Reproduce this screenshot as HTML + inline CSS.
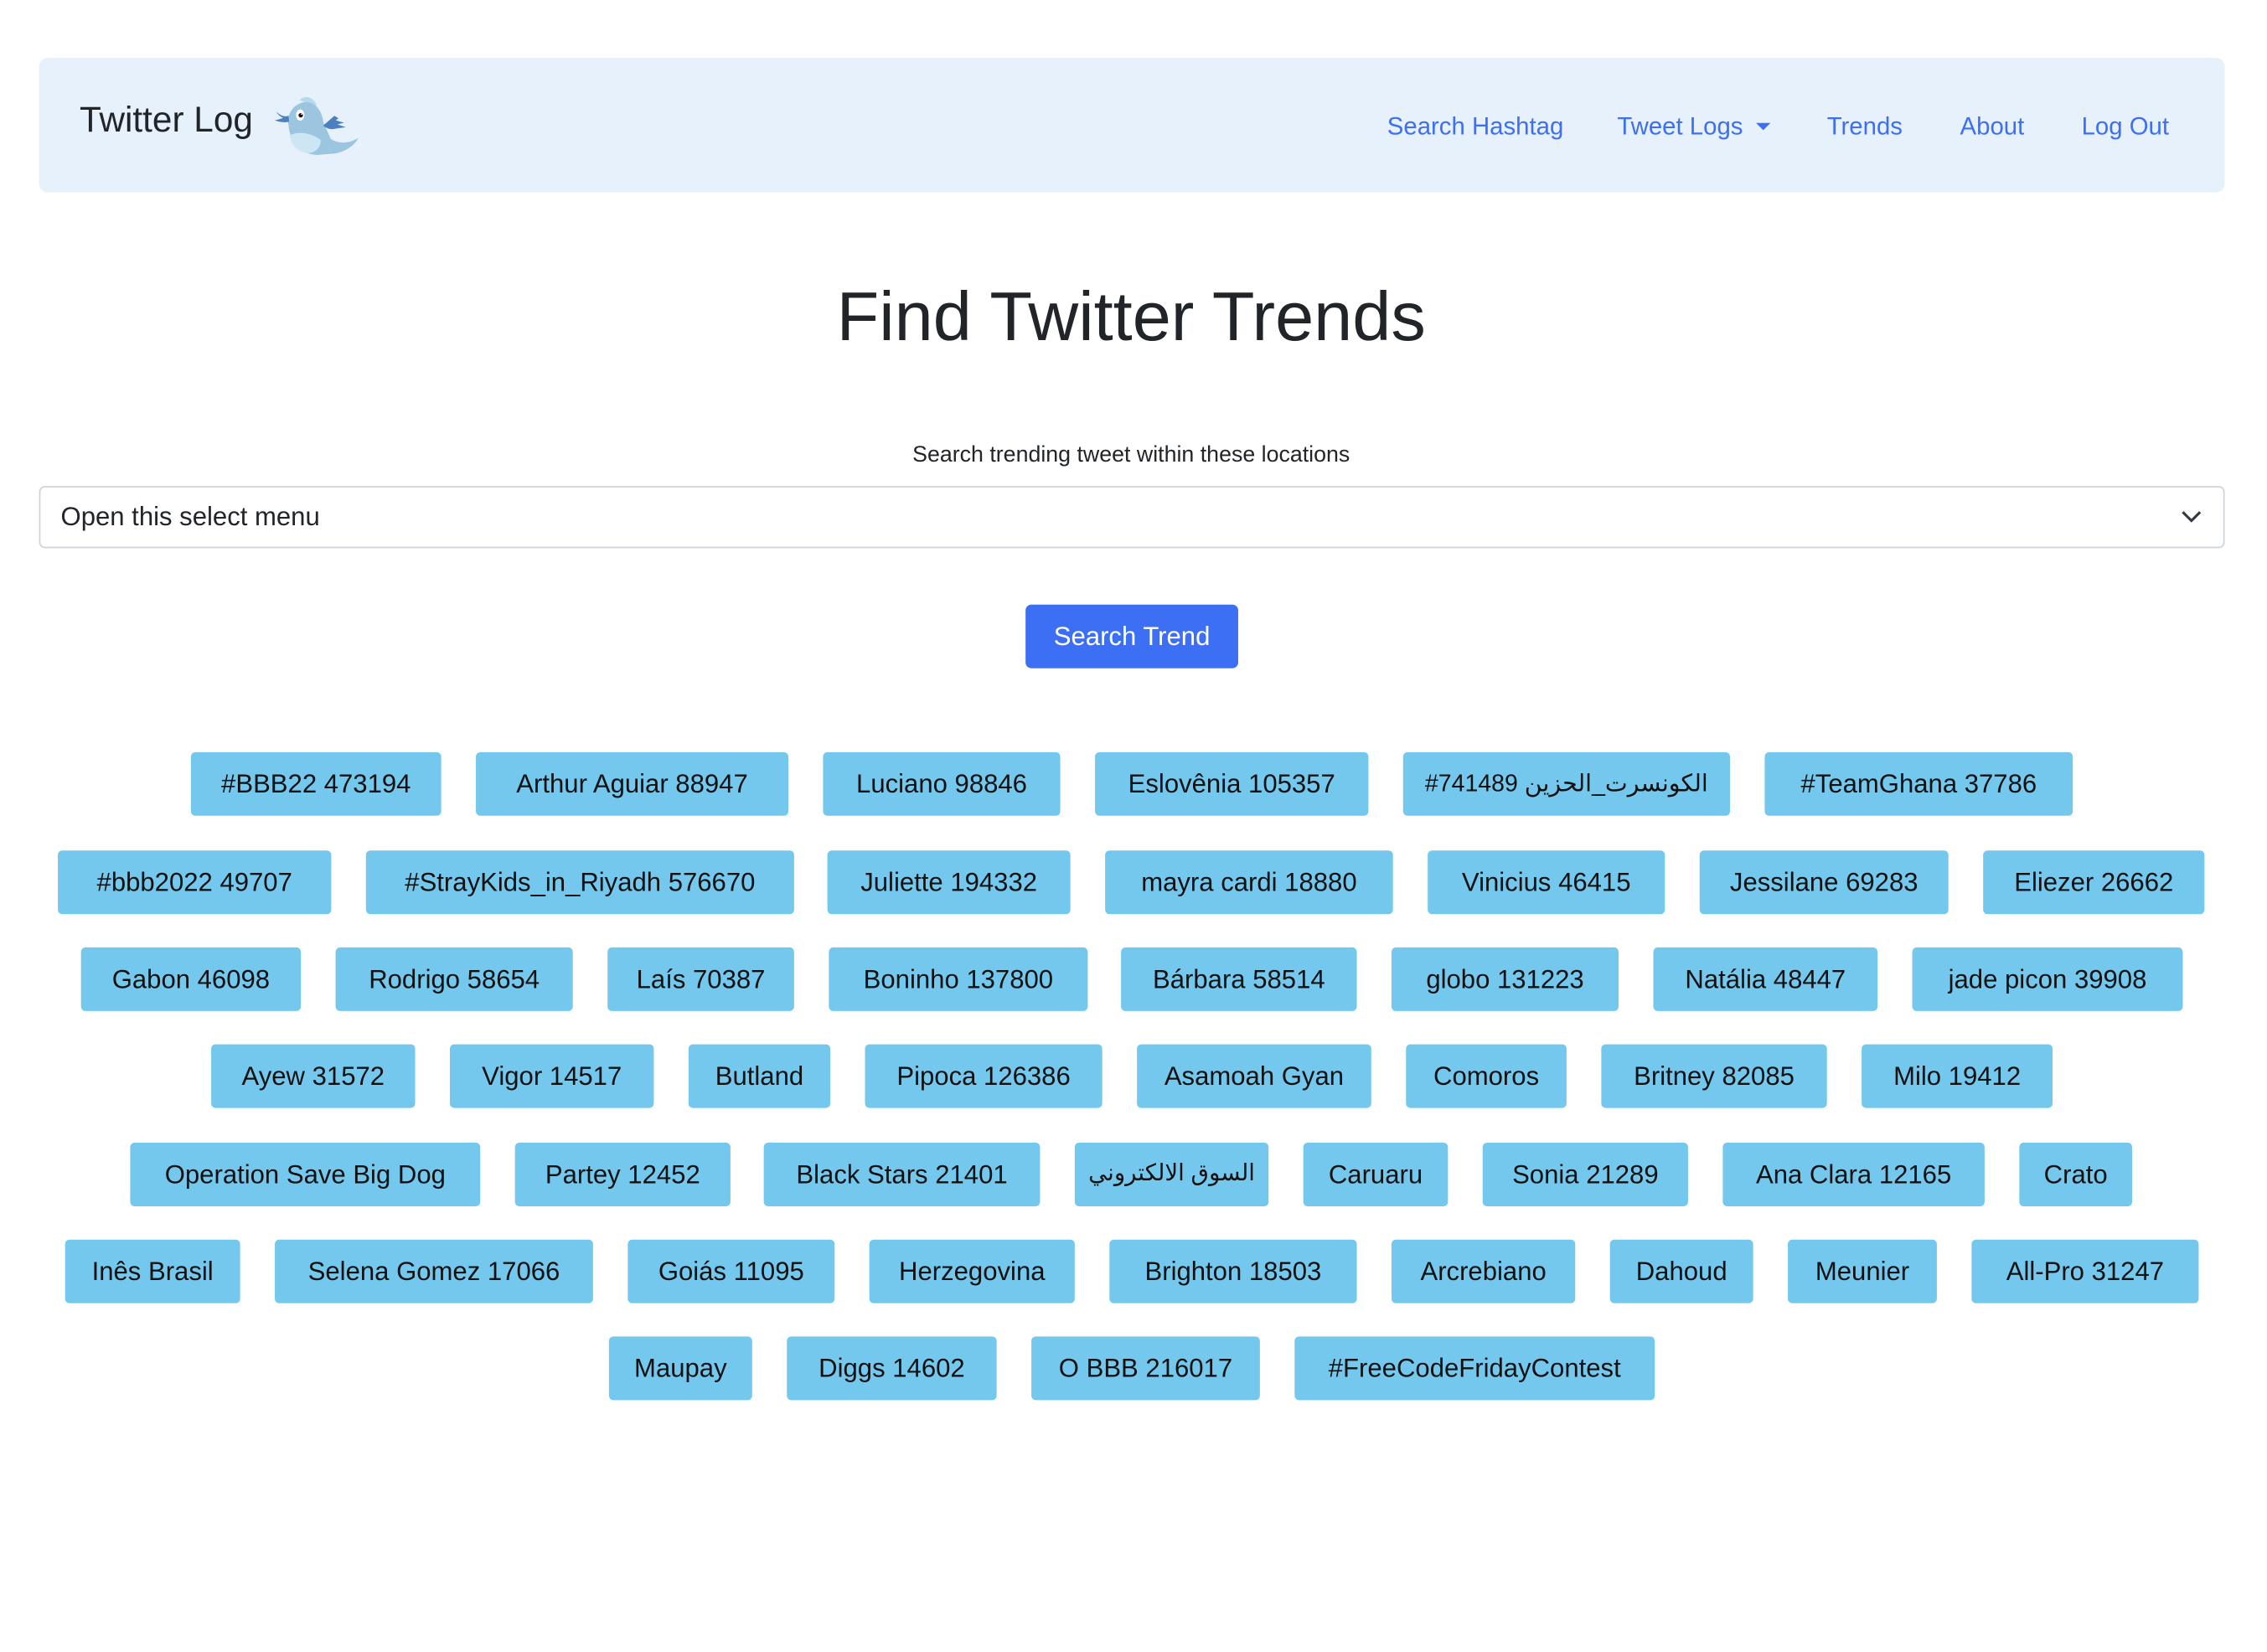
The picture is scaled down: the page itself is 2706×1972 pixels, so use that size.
<!DOCTYPE html>
<html><head><meta charset="utf-8">
<style>
html,body{margin:0;padding:0;background:#fff;}
body{width:2706px;height:1972px;overflow:hidden;position:relative;}
#w{position:absolute;left:0;top:0;width:1568px;height:1142px;transform:scale(1.7266);transform-origin:0 0;font-family:"Liberation Sans","Noto Sans CJK SC","DejaVu Sans",sans-serif;color:#212529;}
.nav{position:absolute;left:27px;top:40px;width:1511px;height:93px;background:#e7f1fb;border-radius:6px;}
.brand{position:absolute;left:55px;top:70px;font-size:24.5px;color:#212529;}
.nl{position:absolute;top:78px;font-size:17px;color:#3d6ff5;white-space:nowrap;}
.caret{display:inline-block;width:0;height:0;border-left:5px solid transparent;border-right:5px solid transparent;border-top:5px solid #3d6ff5;vertical-align:3px;margin-left:9px;}
h1{position:absolute;left:0;width:1564px;top:192px;margin:0;text-align:center;font-size:48px;font-weight:400;color:#212529;}
.lbl{position:absolute;left:0;width:1564px;top:306px;text-align:center;font-size:15.5px;}
.sel{position:absolute;left:27px;top:336px;width:1509px;height:41px;border:1px solid #ced4da;border-radius:4px;}
.sel span{position:absolute;left:14px;top:10px;font-size:18px;}
.btn{position:absolute;left:709px;top:418px;width:147px;height:44px;background:#3d6ff5;border-radius:4px;color:#fff;font-size:18px;text-align:center;line-height:44px;}
.b{position:absolute;height:44px;background:#74c8ee;border-radius:3px;color:#111;font-size:18px;line-height:44px;text-align:center;white-space:nowrap;overflow:hidden;}
</style></head><body><div id="w">
<div class="nav"></div>
<div class="brand">Twitter Log</div>
<svg style="position:absolute;left:186px;top:58px" width="69.2" height="57.6" viewBox="0 0 360 300">
<path d="M110,58 C128,40 158,44 172,78 L140,72Z" fill="#b8d8ec"/>
<path d="M70,150 C60,100 100,62 140,66 C178,72 192,110 196,140 L222,198 C252,218 290,214 322,194 C302,230 262,250 222,252 L172,256 C112,252 76,212 70,150Z" fill="#9cc6e0"/>
<path d="M74,185 C110,170 150,176 186,202 C186,240 152,256 122,246 C92,236 78,212 74,185Z" fill="#cde6f3"/>
<path d="M26,100 C40,114 55,120 70,115 L72,136 C55,141 35,136 20,131 C35,128 45,125 50,122 C40,118 31,110 26,100Z" fill="#4a7fc0"/>
<path d="M195,150 L235,115 L250,124 L240,131 L270,140 L246,146 L276,156 L240,161 C225,166 206,161 195,150Z" fill="#4a7fc0"/>
<ellipse cx="112" cy="112" rx="15" ry="20" fill="#fff"/>
<circle cx="114" cy="113" r="8" fill="#111"/><circle cx="117" cy="109" r="2.5" fill="#fff"/>
</svg>
<div class="nl" style="left:959px">Search Hashtag</div>
<div class="nl" style="left:1118px">Tweet Logs<span class="caret"></span></div>
<div class="nl" style="left:1263px">Trends</div>
<div class="nl" style="left:1355px">About</div>
<div class="nl" style="left:1439px">Log Out</div>
<h1>Find Twitter Trends</h1>
<div class="lbl">Search trending tweet within these locations</div>
<div class="sel"><span>Open this select menu</span>
<svg style="position:absolute;left:1480px;top:14px" width="14" height="12" viewBox="0 0 14 12"><path d="M1,3 L7,9 L13,3" fill="none" stroke="#343a40" stroke-width="1.8"/></svg></div>
<div class="btn">Search Trend</div>

<div class="b" style="top:520px;left:132px;width:173px">#BBB22 473194</div>
<div class="b" style="top:520px;left:329px;width:216px">Arthur Aguiar 88947</div>
<div class="b" style="top:520px;left:569px;width:164px">Luciano 98846</div>
<div class="b" style="top:520px;left:757px;width:189px">Eslovênia 105357</div>
<div class="b" style="top:520px;left:970px;width:226px;font-size:16.5px">#741489 <bdi>الكونسرت_الحزين</bdi></div>
<div class="b" style="top:520px;left:1220px;width:213px">#TeamGhana 37786</div>

<div class="b" style="top:588px;left:40px;width:189px">#bbb2022 49707</div>
<div class="b" style="top:588px;left:253px;width:296px">#StrayKids_in_Riyadh 576670</div>
<div class="b" style="top:588px;left:572px;width:168px">Juliette 194332</div>
<div class="b" style="top:588px;left:764px;width:199px">mayra cardi 18880</div>
<div class="b" style="top:588px;left:987px;width:164px">Vinicius 46415</div>
<div class="b" style="top:588px;left:1175px;width:172px">Jessilane 69283</div>
<div class="b" style="top:588px;left:1371px;width:153px">Eliezer 26662</div>

<div class="b" style="top:655px;left:56px;width:152px">Gabon 46098</div>
<div class="b" style="top:655px;left:232px;width:164px">Rodrigo 58654</div>
<div class="b" style="top:655px;left:420px;width:129px">Laís 70387</div>
<div class="b" style="top:655px;left:573px;width:179px">Boninho 137800</div>
<div class="b" style="top:655px;left:775px;width:163px">Bárbara 58514</div>
<div class="b" style="top:655px;left:962px;width:157px">globo 131223</div>
<div class="b" style="top:655px;left:1143px;width:155px">Natália 48447</div>
<div class="b" style="top:655px;left:1322px;width:187px">jade picon 39908</div>

<div class="b" style="top:722px;left:146px;width:141px">Ayew 31572</div>
<div class="b" style="top:722px;left:311px;width:141px">Vigor 14517</div>
<div class="b" style="top:722px;left:476px;width:98px">Butland</div>
<div class="b" style="top:722px;left:598px;width:164px">Pipoca 126386</div>
<div class="b" style="top:722px;left:786px;width:162px">Asamoah Gyan</div>
<div class="b" style="top:722px;left:972px;width:111px">Comoros</div>
<div class="b" style="top:722px;left:1107px;width:156px">Britney 82085</div>
<div class="b" style="top:722px;left:1287px;width:132px">Milo 19412</div>

<div class="b" style="top:790px;left:90px;width:242px">Operation Save Big Dog</div>
<div class="b" style="top:790px;left:356px;width:149px">Partey 12452</div>
<div class="b" style="top:790px;left:528px;width:191px">Black Stars 21401</div>
<div class="b" style="top:790px;left:743px;width:134px;font-size:16px"><bdi>السوق الالكتروني</bdi></div>
<div class="b" style="top:790px;left:901px;width:100px">Caruaru</div>
<div class="b" style="top:790px;left:1025px;width:142px">Sonia 21289</div>
<div class="b" style="top:790px;left:1191px;width:181px">Ana Clara 12165</div>
<div class="b" style="top:790px;left:1396px;width:78px">Crato</div>

<div class="b" style="top:857px;left:45px;width:121px">Inês Brasil</div>
<div class="b" style="top:857px;left:190px;width:220px">Selena Gomez 17066</div>
<div class="b" style="top:857px;left:434px;width:143px">Goiás 11095</div>
<div class="b" style="top:857px;left:601px;width:142px">Herzegovina</div>
<div class="b" style="top:857px;left:767px;width:171px">Brighton 18503</div>
<div class="b" style="top:857px;left:962px;width:127px">Arcrebiano</div>
<div class="b" style="top:857px;left:1113px;width:99px">Dahoud</div>
<div class="b" style="top:857px;left:1236px;width:103px">Meunier</div>
<div class="b" style="top:857px;left:1363px;width:157px">All-Pro 31247</div>

<div class="b" style="top:924px;left:421px;width:99px">Maupay</div>
<div class="b" style="top:924px;left:544px;width:145px">Diggs 14602</div>
<div class="b" style="top:924px;left:713px;width:158px">O BBB 216017</div>
<div class="b" style="top:924px;left:895px;width:249px">#FreeCodeFridayContest</div>
</div></body></html>
